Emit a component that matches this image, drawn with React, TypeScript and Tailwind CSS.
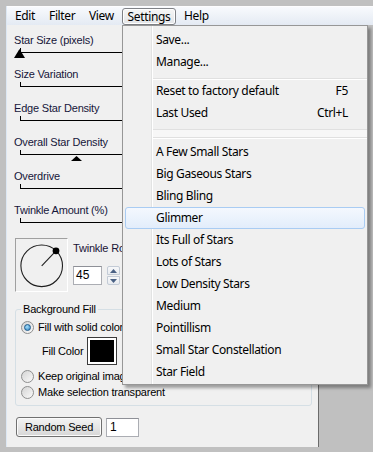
import React from "react";

const presets = [
  "A Few Small Stars",
  "Big Gaseous Stars",
  "Bling Bling",
  "Glimmer",
  "Its Full of Stars",
  "Lots of Stars",
  "Low Density Stars",
  "Medium",
  "Pointillism",
  "Small Star Constellation",
  "Star Field",
];

function Slider({ label, thumb }: { label: string; thumb?: "start" | "mid" }) {
  return (
    <div className="h-[34px]">
      <div className="h-[16px] leading-[16px] pl-[7px] text-[#16163a]">{label}</div>
      <svg width="300" height="18" className="ml-[7px] block">
        <line x1="6.5" y1="0" x2="6.5" y2="5" stroke="#000" strokeWidth="1" />
        <line x1="6" y1="4.5" x2="300" y2="4.5" stroke="#000" strokeWidth="1" />
        {thumb === "start" && <polygon points="5.5,1 0,10 11,10" fill="#000" />}
        {thumb === "mid" && <polygon points="62.5,6 57,11 68,11" fill="#000" />}
      </svg>
    </div>
  );
}

function Radio({ checked }: { checked?: boolean }) {
  return (
    <span className="w-[13px] h-[13px] rounded-full border border-[#8e8f8f] bg-linear-to-br from-[#d4d4d4] to-[#fafafa] flex items-center justify-center shrink-0">
      {checked && (
        <span className="w-[7px] h-[7px] rounded-full border border-[#1c5a8c] bg-[radial-gradient(circle_at_40%_35%,#a6e0fb,#2b7fc0)]" />
      )}
    </span>
  );
}

function MenuItem({ label, shortcut, hot }: { label: string; shortcut?: string; hot?: boolean }) {
  if (hot) {
    return (
      <div className="relative h-[22px] mx-[2px] flex items-center pl-[30px] pr-[17px] border border-[#a9ccf3] rounded-[3px] bg-linear-to-b from-[#f4f8fe] to-[#e2edfb]">
        <span className="flex-1">{label}</span>
        {shortcut && <span>{shortcut}</span>}
      </div>
    );
  }
  return (
    <div className="relative h-[22px] flex items-center pl-[33px] pr-[19px]">
      <span className="flex-1">{label}</span>
      {shortcut && <span>{shortcut}</span>}
    </div>
  );
}

function Sep() {
  return (
    <div className="relative h-[7px] pt-[5px] ml-[30px]">
      <div className="h-px bg-[#e0e0e0]" />
      <div className="h-px bg-white" />
    </div>
  );
}

export default function App() {
  return (
    <div className="relative w-[373px] h-[452px] overflow-hidden bg-[#c0c0c0] pt-[6px] pl-[6px] font-['Noto_Sans','Open_Sans',sans-serif] text-[12px] tracking-[-0.35px] text-black">
      <div className="flex flex-col border-l border-[#dce7f3]">
        {/* menubar */}
        <div className="h-[19px] w-[366px] flex bg-linear-to-b from-[#f8fafd] to-[#e4eaf3] border-t border-[#fdfdfe]">
          <div className="w-[36px] pl-[8px] leading-[18px]">Edit</div>
          <div className="w-[40px] pl-[6px] leading-[18px]">Filter</div>
          <div className="w-[39px] pl-[6px] leading-[18px]">View</div>
          <div className="w-[54px] h-[17px] mt-[1px] rounded-[3px] border border-[#7f8186] bg-linear-to-b from-[#f6f6f6] to-[#e3e5e8] shadow-[inset_0_0_0_1px_#ffffff] flex items-center justify-center leading-[15px]">
            Settings
          </div>
          <div className="pl-[8px] leading-[18px]">Help</div>
        </div>

        {/* body */}
        <div className="w-[312px] h-[422px] bg-[#f0f0f0] border-r border-[#6b6b6b] pt-[7px] flex flex-col font-['Liberation_Sans',Arial,sans-serif] text-[11px] tracking-[-0.2px]">
          <Slider label="Star Size (pixels)" thumb="start" />
          <Slider label="Size Variation" />
          <Slider label="Edge Star Density" />
          <Slider label="Overall Star Density" thumb="mid" />
          <Slider label="Overdrive" />
          <Slider label="Twinkle Amount (%)" />

          <div className="mt-[2px] pl-[8px] flex">
            <div className="w-[53px] h-[54px] border border-t-[#a0a0a0] border-l-[#a0a0a0] border-b-white border-r-white">
              <svg width="51" height="52" className="block">
                <circle cx="25.7" cy="26.8" r="20.8" fill="none" stroke="#1f1f1f" strokeWidth="1.1" />
                <line x1="25.7" y1="26.8" x2="40" y2="11.8" stroke="#1f1f1f" strokeWidth="1.1" />
                <circle cx="40" cy="11.8" r="3.4" fill="#000" />
              </svg>
            </div>
            <div className="ml-[5px] flex flex-col">
              <div className="mt-[2px] h-[16px] leading-[16px] whitespace-nowrap text-[#1a1436]">Twinkle Rotation</div>
              <div className="mt-[10px] flex">
                <div className="w-[29px] h-[19px] border border-[#abadb3] border-t-[#8e9097] bg-white pl-[2px] leading-[17px] text-[12px] tracking-normal">45</div>
                <div className="ml-[5px] w-[13px] h-[19px] flex flex-col">
                  <div className="h-[9px] border border-[#c3cbd6] rounded-t-[2px] bg-linear-to-b from-[#f7f8fa] to-[#e8ebef] flex items-center justify-center">
                    <svg width="7" height="4"><polygon points="3.5,0 7,4 0,4" fill="#4a6184" /></svg>
                  </div>
                  <div className="mt-px h-[9px] border border-[#c3cbd6] rounded-b-[2px] bg-linear-to-b from-[#f7f8fa] to-[#e8ebef] flex items-center justify-center">
                    <svg width="7" height="4"><polygon points="0,0 7,0 3.5,4" fill="#4a6184" /></svg>
                  </div>
                </div>
              </div>
            </div>
          </div>

          <fieldset className="mt-[9px] ml-[8px] w-[297px] border border-[#d5dfe5] rounded-[3px] pb-[5px]">
            <legend className="ml-[5px] px-[2px] leading-[16px]">Background Fill</legend>
            <div className="mt-[2px] h-[16px] flex items-center pl-[5px]">
              <Radio checked />
              <span className="ml-[4px] whitespace-nowrap">Fill with solid color</span>
            </div>
            <div className="mt-[2px] h-[28px] flex items-center pl-[26px]">
              <span className="w-[45px] whitespace-nowrap">Fill Color</span>
              <div className="w-[30px] h-[28px] border border-[#3a3a3a] bg-white p-[2px]">
                <div className="w-full h-full bg-black" />
              </div>
            </div>
            <div className="mt-[3px] h-[16px] flex items-center pl-[5px]">
              <Radio />
              <span className="ml-[4px] whitespace-nowrap">Keep original image</span>
            </div>
            <div className="h-[16px] flex items-center pl-[5px]">
              <Radio />
              <span className="ml-[4px] whitespace-nowrap">Make selection transparent</span>
            </div>
          </fieldset>

          <div className="mt-[11px] ml-[9px] flex items-start">
            <div className="w-[86px] h-[20px] rounded-[3px] border border-[#707070] bg-linear-to-b from-[#f3f3f3] via-[#e6e6e6] to-[#d6d6d6] shadow-[inset_0_0_0_1px_#fbfbfb] flex items-center justify-center leading-[16px]">
              Random Seed
            </div>
            <div className="ml-[4px] mt-px w-[33px] h-[19px] border border-[#abadb3] border-t-[#8e9097] bg-white pl-[3px] leading-[17px] text-[12px] tracking-normal">1</div>
          </div>
        </div>
      </div>

      {/* dropdown menu */}
      <div className="absolute left-[122px] top-[25px] w-[246px] border border-[#979797] bg-[#f0f0f0] pt-[3px] pb-[1px] shadow-[3px_3px_3px_rgba(0,0,0,0.35)]">
        <div className="absolute left-[28px] top-0 bottom-0 w-px bg-[#e2e3e3]" />
        <div className="absolute left-[29px] top-0 bottom-0 w-px bg-white" />
        <MenuItem label="Save..." />
        <MenuItem label="Manage..." />
        <Sep />
        <MenuItem label="Reset to factory default" shortcut="F5" />
        <MenuItem label="Last Used" shortcut="Ctrl+L" />
        <div className="relative h-[17px] pt-[5px] ml-[30px]">
          <div className="h-px bg-[#e0e0e0]" />
          <div className="h-[7px] bg-[#f7f7f7]" />
          <div className="h-px bg-[#e0e0e0]" />
          <div className="h-px bg-white" />
        </div>
        {presets.map((p) => (
          <MenuItem key={p} label={p} hot={p === "Glimmer"} />
        ))}
      </div>
    </div>
  );
}
